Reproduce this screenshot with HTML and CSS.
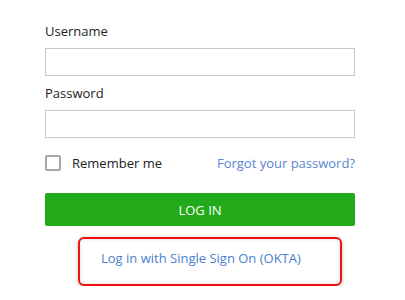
FILE: index.html
```html
<!DOCTYPE html>
<html>
<head>
<meta charset="utf-8">
<link rel="stylesheet" href="styles.css">
</head>
<body>
<form class="login">
  <label class="label" for="u">Username</label>
  <input class="field" id="u" type="text">
  <label class="label label-pw" for="p">Password</label>
  <input class="field" id="p" type="password">
  <div class="row">
    <label class="remember"><span class="box"></span>Remember me</label>
    <a class="link" href="#">Forgot your password?</a>
  </div>
  <button class="btn" type="button">LOG IN</button>
  <div class="sso"><a class="link sso-link" href="#">Log in with Single Sign On (OKTA)</a></div>
</form>
</body>
</html>
```
FILE: styles.css
```css
html, body { margin: 0; padding: 0; background: #fff; }
body { font-family: "Open Sans", "Liberation Sans", sans-serif; font-size: 13px; color: #222; }
.login { display: flex; flex-direction: column; width: 310px; padding: 22px 0 0 45px; }
.label { display: block; line-height: 18px; height: 18px; margin-bottom: 8px; }
.label-pw { margin-top: 8px; margin-bottom: 8px; }
.field { box-sizing: border-box; width: 310px; height: 28px; margin: 0; border: 1px solid #c8c8c8; border-radius: 0; padding: 0 6px; font: inherit; outline: none; }
.row { display: flex; justify-content: space-between; align-items: center; margin-top: 17px; height: 16px; }
.remember { display: flex; align-items: center; gap: 11px; line-height: 18px; color: #222; }
.box { box-sizing: border-box; width: 16px; height: 16px; border: 2px solid #a8a8a8; border-radius: 2px; }
.link { color: #5a86d0; text-decoration: none; line-height: 18px; }
.btn { box-sizing: border-box; width: 310px; height: 33px; margin-top: 22px; border: 0; border-radius: 2px; background: #23aa1a; color: #fff; font: inherit; font-size: 13px; padding: 0; }
.sso { box-sizing: border-box; width: 264px; height: 49px; margin: 11px 0 0 33px; border: 2px solid #f01010; border-radius: 6px; box-shadow: 0 1px 4px rgba(0,0,0,0.25), inset 0 0 4px rgba(0,0,0,0.12); padding: 10px 0 0 21px; }
.sso-link { color: #4a7fcf; }
```
